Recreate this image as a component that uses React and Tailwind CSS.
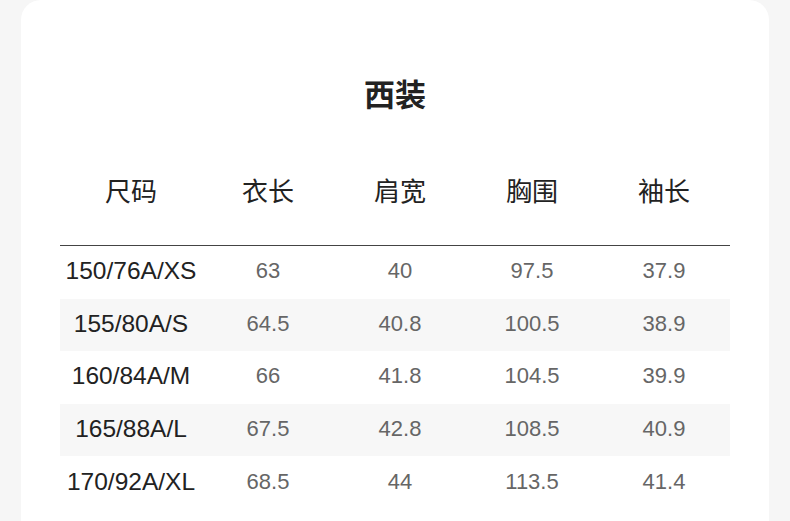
export default function App() {
  const rows = [
    ["150/76A/XS", "63", "40", "97.5", "37.9"],
    ["155/80A/S", "64.5", "40.8", "100.5", "38.9"],
    ["160/84A/M", "66", "41.8", "104.5", "39.9"],
    ["165/88A/L", "67.5", "42.8", "108.5", "40.9"],
    ["170/92A/XL", "68.5", "44", "113.5", "41.4"],
  ];
  const headers = ["尺码", "衣长", "肩宽", "胸围", "袖长"];
  const font = { fontFamily: '"Liberation Sans", "Noto Sans CJK SC", sans-serif' };
  return (
    <div className="w-[790px] h-[521px] overflow-hidden bg-[#f6f6f6]" style={font}>
      <div className="ml-[21px] w-[748px] h-[521px] bg-white rounded-t-[20px] px-[39px] pt-[78px]">
        <div className="text-center text-[31px] leading-[36px] font-bold text-[#222]">西装</div>
        <div className="mt-[60px] pb-[35px] border-b border-[#444] grid grid-cols-[142px_132px_132px_132px_132px]">
          {headers.map((h) => (
            <div key={h} className="text-center text-[26px] leading-[36px] text-[#222]">{h}</div>
          ))}
        </div>
        {rows.map((r, i) => (
          <div
            key={r[0]}
            className={`grid grid-cols-[142px_132px_132px_132px_132px] h-[52.6px] items-center pb-[2px] ${i % 2 === 1 ? "bg-[#f7f7f7]" : "bg-white"}`}
          >
            {r.map((c, j) => (
              <div
                key={j}
                className={j === 0 ? "text-center text-[24.5px] leading-[28px] text-[#222]" : "text-center text-[22px] leading-[28px] text-[#666]"}
              >
                {c}
              </div>
            ))}
          </div>
        ))}
      </div>
    </div>
  );
}
